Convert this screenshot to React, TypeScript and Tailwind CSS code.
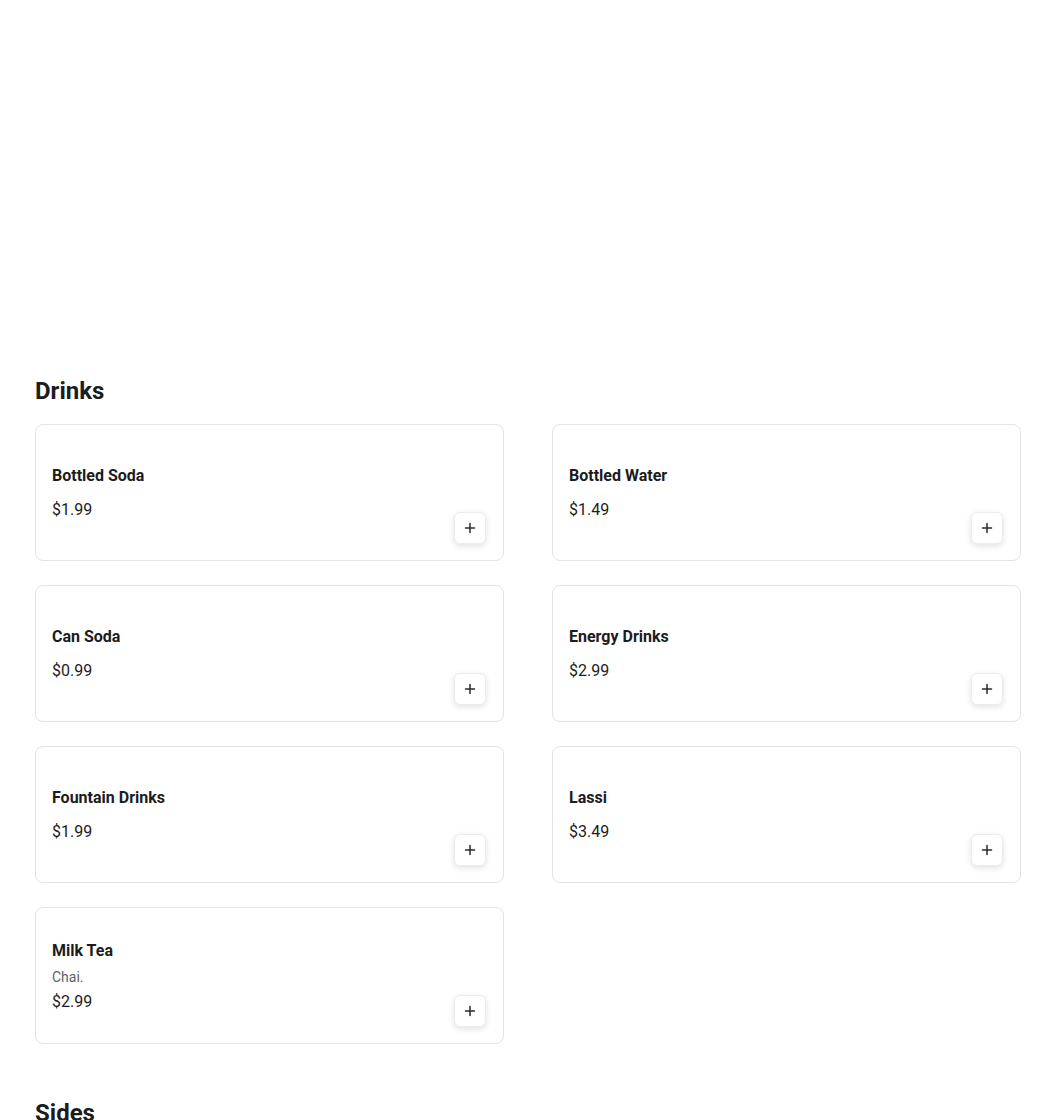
import React from "react";

type Item = { name: string; price: string; desc?: string };

const drinks: Item[] = [
  { name: "Bottled Soda", price: "$1.99" },
  { name: "Bottled Water", price: "$1.49" },
  { name: "Can Soda", price: "$0.99" },
  { name: "Energy Drinks", price: "$2.99" },
  { name: "Fountain Drinks", price: "$1.99" },
  { name: "Lassi", price: "$3.49" },
  { name: "Milk Tea", price: "$2.99", desc: "Chai." },
];

function PlusIcon() {
  return (
    <svg width="12" height="12" viewBox="0 0 12 12" fill="none">
      <path d="M6 1.5v9M1.5 6h9" stroke="#2a2a2a" strokeWidth="1.5" strokeLinecap="round" />
    </svg>
  );
}

function Card({ item }: { item: Item }) {
  return (
    <div
      className={
        item.desc
          ? "relative flex h-[137px] flex-col justify-center rounded-lg border border-[#e3e3e3] bg-white px-4 pt-[2px]"
          : "relative flex h-[137px] flex-col justify-center rounded-lg border border-[#e3e3e3] bg-white px-4"
      }
    >
      <div className="text-[16px] font-bold leading-6 text-[#1c1c1c]">{item.name}</div>
      {item.desc ? (
        <>
          <div className="mt-1 text-[14px] leading-5 text-[#5f5f5f]">{item.desc}</div>
          <div className="mt-[3px] text-[16px] leading-6 text-[#1c1c1c]">{item.price}</div>
        </>
      ) : (
        <div className="mt-[10px] text-[16px] leading-6 text-[#1c1c1c]">{item.price}</div>
      )}
      <button className="absolute bottom-[16px] right-[17px] flex h-[32px] w-[32px] items-center justify-center rounded-md border border-[#ececec] bg-white shadow-[0_2px_6px_rgba(0,0,0,0.12)]">
        <PlusIcon />
      </button>
    </div>
  );
}

export default function App() {
  return (
    <div className="h-[1120px] overflow-hidden bg-white" style={{ fontFamily: "Roboto, 'Liberation Sans', sans-serif" }}>
      <div className="ml-[35px] w-[986px] pt-[375px]">
        <h2 className="text-[24px] font-bold leading-8 text-[#1c1c1c]">Drinks</h2>
        <div className="mt-[17px] grid grid-cols-2 gap-x-[48px] gap-y-[24px]">
          {drinks.map((d) => (
            <Card key={d.name} item={d} />
          ))}
        </div>
        <h2 className="mt-[53px] text-[24px] font-bold leading-8 text-[#1c1c1c]">Sides</h2>
      </div>
    </div>
  );
}
